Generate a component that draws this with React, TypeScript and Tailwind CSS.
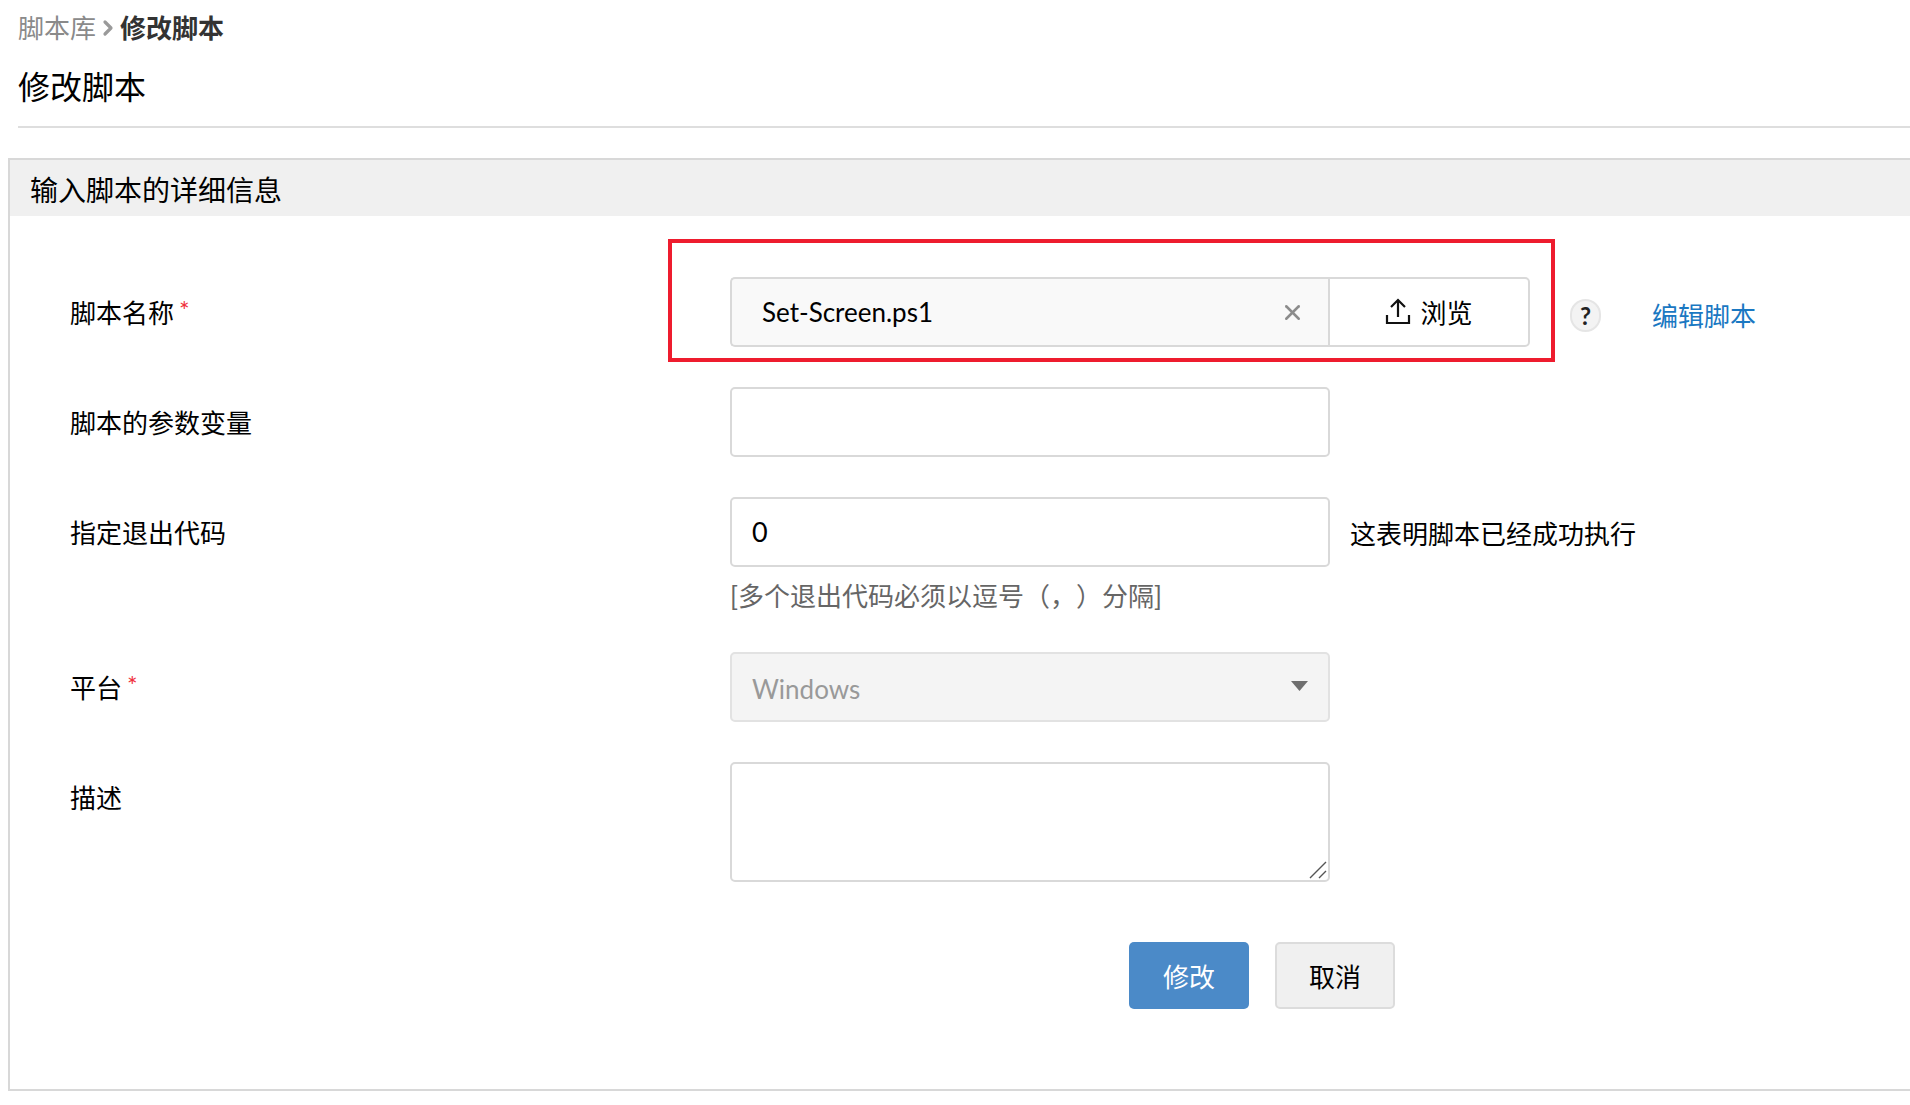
import React from "react";
import { ChevronRight, X } from "lucide-react";

const fieldClass = "h-[70px] border-2 border-[#d9d9d9] rounded-[5px]";

const Label: React.FC<{ text: string; required?: boolean }> = ({ text, required }) => (
  <div className="w-[660px] shrink-0 h-[69px] pt-[4px] flex items-center text-[26px] text-black">
    {text}
    {required && <span className="text-[#f0303c] text-[25px] ml-[5px] -mt-[6px]">*</span>}
  </div>
);

const App: React.FC = () => {
  return (
    <div className="w-[1910px] h-[1105px] overflow-hidden bg-white font-['Lato','Noto_Sans_CJK_SC',sans-serif]">
      {/* Breadcrumb */}
      <div className="h-[56px] pl-[18px] flex items-center text-[26px] leading-none">
        <span className="text-[#8a8a8a]">脚本库</span>
        <ChevronRight size={24} strokeWidth={3.2} className="text-[#9a9a9a]" />
        <span className="font-bold text-[#333]">修改脚本</span>
      </div>

      <div className="ml-[18px] h-[72px] border-b-2 border-[#dedede]">
        <h1 className="text-[32px] leading-[62px] text-black">修改脚本</h1>
      </div>

      {/* Panel */}
      <div className="ml-[8px] mt-[30px] h-[933px] border-2 border-r-0 border-[#d8d8d8]">
        <div className="h-[56px] bg-[#f0f0f0] pt-[4px] pl-[20px] flex items-center text-[28px] text-black">
          输入脚本的详细信息
        </div>

        <div className="pl-[60px] pt-[61px]">
          {/* Script name */}
          <div className="flex items-start">
            <Label text="脚本名称" required />
            <div className="relative w-[801px] flex">
              <div className={`${fieldClass} w-[598px] rounded-r-none border-r-0 bg-[#f9f9f9] flex items-center pt-[1px] pl-[30px] pr-[23px] justify-between text-[26px] text-black`}>
                <span>Set-Screen.ps1</span>
                <X size={25} strokeWidth={2.4} className="text-[#8c8c8c]" />
              </div>
              <div className="w-[202px] h-[70px] pt-[2px] border-2 border-[#d9d9d9] rounded-r-[5px] flex items-center justify-center gap-[9px] text-[26px] text-black">
                <svg width="26" height="28" viewBox="0 0 26 28" fill="none" stroke="#111" strokeWidth="2.2" className="-mt-[4px]">
                  <path d="M13 20V3M6 10l7-7 7 7" />
                  <path d="M2 18v8h22v-8" />
                </svg>
                浏览
              </div>
              {/* Red annotation */}
              <div className="absolute -left-[62px] -top-[38px] w-[887px] h-[123px] border-4 border-[#ee1c2e] pointer-events-none" />
            </div>
            <div className="ml-[39px] mt-[22px] w-[31px] h-[33px] rounded-full border-2 border-[#e5e5e5] bg-[#f3f3f3] flex items-center justify-center text-[24px] font-bold text-[#222] leading-none">
              ?
            </div>
            <a className="ml-[51px] mt-[20px] text-[26px] text-[#1a78c2]">编辑脚本</a>
          </div>

          {/* Params */}
          <div className="flex items-start mt-[40px]">
            <Label text="脚本的参数变量" />
            <input className={`${fieldClass} w-[600px]`} />
          </div>

          {/* Exit code */}
          <div className="flex items-start mt-[40px]">
            <Label text="指定退出代码" />
            <div>
              <div className="flex items-center">
                <div className={`${fieldClass} w-[600px] flex items-center pl-[20px] text-[27px] text-black`}>0</div>
                <span className="ml-[20px] pt-[4px] text-[26px] text-black">这表明脚本已经成功执行</span>
              </div>
              <div className="mt-[10px] h-[39px] flex items-center text-[26px] text-[#666] [text-spacing-trim:space-all]">
                [多个退出代码必须以逗号（，）分隔]
              </div>
            </div>
          </div>

          {/* Platform */}
          <div className="flex items-start mt-[36px]">
            <Label text="平台" required />
            <div className="w-[600px] h-[70px] border-2 border-[#e2e2e2] rounded-[5px] bg-[#f4f4f4] flex items-center justify-between pt-[4px] pl-[20px] pr-[20px] text-[26px] text-[#999]">
              <span>Windows</span>
              <svg width="17" height="10" viewBox="0 0 17 10" className="-mt-[6px]">
                <path d="M0 0h17L8.5 10z" fill="#6f6f6f" />
              </svg>
            </div>
          </div>

          {/* Description */}
          <div className="flex items-start mt-[40px]">
            <Label text="描述" />
            <div className="relative">
              <textarea className="w-[600px] h-[120px] border-2 border-[#d9d9d9] rounded-[5px] resize-none block" />
              <svg width="18" height="18" viewBox="0 0 18 18" fill="none" stroke="#555" strokeWidth="1.4" className="absolute right-[3px] bottom-[3px]">
                <path d="M1 17L17 1M10 17l7-7" />
              </svg>
            </div>
          </div>

          {/* Actions */}
          <div className="flex pl-[1059px] gap-[26px] mt-[60px]">
            <button className="w-[120px] h-[67px] pt-[3px] rounded-[5px] bg-[#4b8ac8] text-white text-[26px]">修改</button>
            <button className="w-[120px] h-[67px] pt-[3px] rounded-[5px] border-2 border-[#dcdcdc] bg-[#f0f0f0] text-black text-[26px]">取消</button>
          </div>
        </div>
      </div>
    </div>
  );
};

export default App;
